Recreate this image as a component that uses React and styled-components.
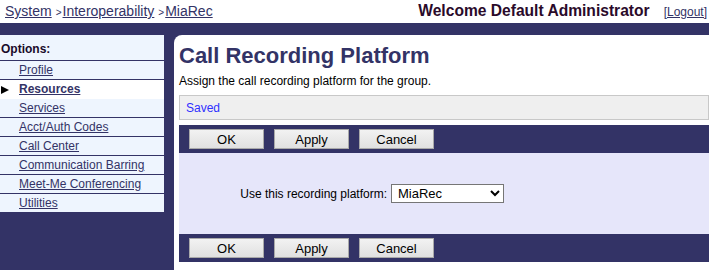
import React from "react";
import styled, { createGlobalStyle } from "styled-components";

const navy = "#333366";

const Global = createGlobalStyle`
    html, body {
        margin: 0;
        padding: 0;
        background: #ffffff;
        font-family: "Liberation Sans", Arial, sans-serif;
        overflow: hidden;
    }
`

const Page = styled.div`
    width: 717px;
    height: 270px;
    display: flex;
    flex-direction: column;
`

const Header = styled.div`
    height: 23px;
    box-sizing: border-box;
    display: flex;
    justify-content: space-between;
    align-items: baseline;
    padding: 3px 10px 0 5px;
    line-height: 16px;
`

const Crumbs = styled.div`
    display: flex;
    align-items: baseline;
    font-size: 14px;
`

const Link = styled.a`
    color: ${navy};
    text-decoration: underline;
    font-weight: ${({ $bold }) => ($bold ? "bold" : "normal")};
    cursor: pointer;
`

const Sep = styled.span`
    font-size: 10px;
    color: ${navy};
    margin: 0 1px 0 4px;
`

const Welcome = styled.div`
    display: flex;
    align-items: baseline;
    gap: 14px;
`

const WelcomeText = styled.span`
    font-size: 15.6px;
    font-weight: bold;
    color: #2a0a2a;
`

const Logout = styled(Link)`
    font-size: 12px;
`

const Main = styled.div`
    flex: 1;
    width: 709px;
    display: flex;
    background: ${navy};
    padding-top: 12px;
    box-sizing: border-box;
`

const NavColumn = styled.div`
    width: 174px;
    flex-shrink: 0;
`

const Sidebar = styled.div`
    width: 164px;
    background: #eef5fe;
`

const SideTitle = styled.div`
    height: 25px;
    box-sizing: border-box;
    padding: 7px 0 0 1px;
    font-size: 12px;
    line-height: 14px;
    font-weight: bold;
    color: #1a0a2a;
`

const NavRow = styled.div`
    height: 19px;
    box-sizing: border-box;
    display: flex;
    align-items: flex-start;
    padding-top: 1px;
    border-top: 1px solid ${({ $afterActive }) => ($afterActive ? "#ffffff" : navy)};
    background: ${({ $active }) => ($active ? "#ffffff" : "transparent")};
    font-size: 12px;
    line-height: 16px;
`

const Marker = styled.span`
    width: 19px;
    flex-shrink: 0;
    display: flex;
    align-items: center;
    height: 16px;
`

const Arrow = styled.span`
    width: 0;
    height: 0;
    margin: 1px 0 0 1px;
    border-left: 8px solid #000;
    border-top: 4.5px solid transparent;
    border-bottom: 4.5px solid transparent;
`

const Content = styled.div`
    flex: 1;
    background: #ffffff;
    border-top-left-radius: 8px;
    padding: 7px 0 0 5px;
`

const Title = styled.h1`
    margin: 0;
    font-size: 22px;
    line-height: 28px;
    font-weight: bold;
    color: ${navy};
`

const Desc = styled.div`
    margin-top: 4px;
    font-size: 12px;
    line-height: 14px;
    color: #000;
`

const Notice = styled.div`
    margin-top: 7px;
    height: 25px;
    box-sizing: border-box;
    border: 1px solid #c8c8c8;
    background: #efefef;
    padding-left: 6px;
    display: flex;
    align-items: center;
    font-size: 12px;
    color: #2f2fff;
`

const ButtonBar = styled.div`
    height: 28px;
    box-sizing: border-box;
    background: ${navy};
    display: flex;
    align-items: center;
    gap: 10px;
    padding-left: 10px;
    margin-top: ${({ $top }) => $top || 0}px;
`

const Button = styled.button`
    width: 75px;
    height: 20px;
    margin: 0;
    padding: 0;
    box-sizing: border-box;
    border: 1px solid #a9a9a9;
    background: linear-gradient(#f2f2f2, #e0e0e0);
    font-family: "Liberation Sans", Arial, sans-serif;
    font-size: 13px;
    color: #000;
`

const FormArea = styled.div`
    height: 81px;
    background: #e6e6fa;
    display: flex;
    align-items: center;
`

const Label = styled.label`
    width: 208px;
    text-align: right;
    font-size: 12px;
    color: #000;
    margin-right: 4px;
`

const Select = styled.select`
    width: 113px;
    height: 19px;
    box-sizing: border-box;
    border: 1px solid #767676;
    border-radius: 0;
    background: #fff;
    font-family: "Liberation Sans", Arial, sans-serif;
    font-size: 13px;
    padding: 0 0 0 2px;
    color: #000;
`

const navItems = [
    "Profile",
    "Resources",
    "Services",
    "Acct/Auth Codes",
    "Call Center",
    "Communication Barring",
    "Meet-Me Conferencing",
    "Utilities",
];

function Buttons({ top }) {
    return (
        <ButtonBar $top={top}>
            <Button>OK</Button>
            <Button>Apply</Button>
            <Button>Cancel</Button>
        </ButtonBar>
    );
}

export default function App() {
    const active = "Resources";
    const activeIdx = navItems.indexOf(active);

    return (
        <Page>
            <Global />
            <Header>
                <Crumbs>
                    <Link>System</Link>
                    <Sep>&gt;</Sep>
                    <Link>Interoperability</Link>
                    <Sep>&gt;</Sep>
                    <Link>MiaRec</Link>
                </Crumbs>
                <Welcome>
                    <WelcomeText>Welcome Default Administrator</WelcomeText>
                    <Logout>[Logout]</Logout>
                </Welcome>
            </Header>
            <Main>
                <NavColumn>
                    <Sidebar>
                        <SideTitle>Options:</SideTitle>
                        {navItems.map((item, i) => (
                            <NavRow key={item} $active={i === activeIdx} $afterActive={i === activeIdx + 1}>
                                <Marker>{i === activeIdx && <Arrow />}</Marker>
                                <Link $bold={i === activeIdx}>{item}</Link>
                            </NavRow>
                        ))}
                    </Sidebar>
                </NavColumn>
                <Content>
                    <Title>Call Recording Platform</Title>
                    <Desc>Assign the call recording platform for the group.</Desc>
                    <Notice>Saved</Notice>
                    <Buttons top={5} />
                    <FormArea>
                        <Label>Use this recording platform:</Label>
                        <Select defaultValue="MiaRec">
                            <option>MiaRec</option>
                        </Select>
                    </FormArea>
                    <Buttons />
                </Content>
            </Main>
        </Page>
    );
}
